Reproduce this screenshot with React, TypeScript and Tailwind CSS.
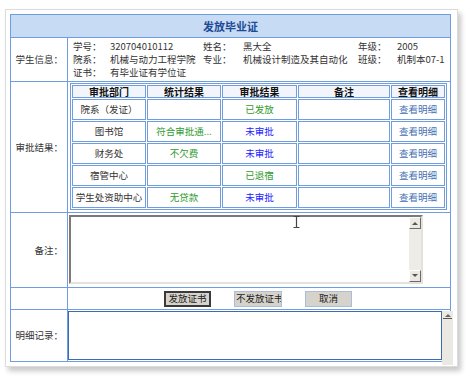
import React from "react";

const B = "border-[#6f9ddf]";

function Label({ children }: { children: React.ReactNode }) {
  return (
    <div className={`w-[57px] shrink-0 border-r ${B} flex items-center justify-end pr-[4px] text-[9.5px] text-[#333]`}>
      {children}
    </div>
  );
}

function ScrollBtn({ up }: { up: boolean }) {
  return (
    <div className="w-[12px] h-[12px] bg-[#ece9e2] border border-t-white border-l-white border-r-[#6b6b6b] border-b-[#6b6b6b] flex items-center justify-center">
      <svg width="6" height="4" viewBox="0 0 6 4">
        {up ? <path d="M0 4 L3 1 L6 4 Z" fill="#555" /> : <path d="M0 0 L3 3 L6 0 Z" fill="#555" />}
      </svg>
    </div>
  );
}

const rows = [
  { dept: "院系（发证）", stat: "", statC: "", res: "已发放", resC: "text-[#2f9a2f]" },
  { dept: "图书馆", stat: "符合审批通...", statC: "text-[#2f9a2f]", res: "未审批", resC: "text-[#2323ff]" },
  { dept: "财务处", stat: "不欠费", statC: "text-[#2f9a2f]", res: "未审批", resC: "text-[#2323ff]" },
  { dept: "宿管中心", stat: "", statC: "", res: "已退宿", resC: "text-[#2f9a2f]" },
  { dept: "学生处资助中心", stat: "无贷款", statC: "text-[#2f9a2f]", res: "未审批", resC: "text-[#2323ff]" },
];

export default function App() {
  const cell = `border ${B} bg-white flex items-center justify-center text-[9.5px] whitespace-nowrap overflow-hidden`;
  const head = `border ${B} bg-[#f2f6fc] flex items-center justify-center text-[10px] font-bold text-[#111] leading-none`;
  return (
    <div className="w-[469px] h-[382px] bg-white font-['Noto_Sans_CJK_SC',sans-serif] text-[#333] overflow-hidden">
      <div className="ml-[5px] mt-[9px] w-[453px] h-[358px] p-[4px] bg-white border border-[#dcdcdc] shadow-[3px_4px_5px_rgba(0,0,0,0.22)]">
        <div className={`w-[441px] h-[348px] border ${B} flex flex-col`}>
          {/* header */}
          <div className={`h-[23px] shrink-0 border-b ${B} bg-[#c7dbf4] flex items-center justify-center text-[11px] font-bold text-[#1d4a96]`}>
            发放毕业证
          </div>
          {/* student info */}
          <div className={`h-[44px] shrink-0 border-b ${B} flex`}>
            <Label>学生信息：</Label>
            <div className="flex-1 pl-[5px] pt-[2px] text-[9.5px] leading-[13px]">
              <div className="grid grid-cols-[37px_93px_40px_115px_39px_1fr]">
                <span>学号：</span><span>320704010112</span>
                <span>姓名：</span><span>黑大全</span>
                <span>年级：</span><span>2005</span>
                <span>院系：</span><span className="whitespace-nowrap">机械与动力工程学院</span>
                <span>专业：</span><span className="whitespace-nowrap">机械设计制造及其自动化</span>
                <span>班级：</span><span className="whitespace-nowrap">机制本07-1</span>
                <span>证书：</span><span className="whitespace-nowrap col-span-5">有毕业证有学位证</span>
              </div>
            </div>
          </div>
          {/* approval */}
          <div className={`h-[131px] shrink-0 border-b ${B} flex`}>
            <Label>审批结果：</Label>
            <div className="flex-1 pl-[2px] pt-[1px]">
              <div className={`grid grid-cols-[74px_74px_75px_92px_54px] grid-rows-[13px_repeat(5,21px)] gap-[1px] p-[1px] border ${B} w-[377px]`}>
                <div className={head}>审批部门</div>
                <div className={head}>统计结果</div>
                <div className={head}>审批结果</div>
                <div className={head}>备注</div>
                <div className={head}>查看明细</div>
                {rows.map((r, i) => (
                  <React.Fragment key={i}>
                    <div className={cell}>{r.dept}</div>
                    <div className={`${cell} ${r.statC}`}>{r.stat}</div>
                    <div className={`${cell} ${r.resC}`}>{r.res}</div>
                    <div className={cell}></div>
                    <div className={`${cell} text-[#4470b4]`}>查看明细</div>
                  </React.Fragment>
                ))}
              </div>
            </div>
          </div>
          {/* remarks */}
          <div className={`h-[75px] shrink-0 border-b ${B} flex`}>
            <Label>备注：</Label>
            <div className="flex-1 pl-[1px] pt-[2px] relative">
              <div className="w-[354px] h-[69px] border-2 border-t-[#7a7a7a] border-l-[#7a7a7a] border-r-[#e4e2dc] border-b-[#e4e2dc] bg-white flex justify-end">
                <div className="w-[12px] h-full bg-[#eeece6] flex flex-col justify-between">
                  <ScrollBtn up />
                  <ScrollBtn up={false} />
                </div>
              </div>
              <svg className="absolute left-[225px] top-[3px]" width="7" height="12" viewBox="0 0 7 12">
                <path d="M0.5 0.5 H6.5 M3.5 0.5 V11.5 M0.5 11.5 H6.5" stroke="#444" strokeWidth="1.2" fill="none" />
              </svg>
            </div>
          </div>
          {/* buttons */}
          <div className={`h-[22px] shrink-0 border-b ${B} flex`}>
            <div className={`w-[57px] shrink-0 border-r ${B}`} />
            <div className="flex-1 flex items-center pl-[96px] gap-[23px]">
              <div className="w-[47px] h-[16px] bg-[#d6d3cc] border-2 border-[#3a3a3a] flex items-center justify-center text-[9.5px] text-[#222] leading-none">发放证书</div>
              <div className="w-[48px] h-[16px] bg-[#d6d3cc] border border-[#a9bddc] flex items-center justify-start pl-[1px] text-[9.5px] text-[#222] leading-none whitespace-nowrap overflow-hidden">不发放证书</div>
              <div className="w-[47px] h-[16px] bg-[#d6d3cc] border border-[#a9bddc] flex items-center justify-center text-[9.5px] text-[#222] leading-none">取消</div>
            </div>
          </div>
          {/* detail */}
          <div className="flex-1 flex relative">
            <Label>明细记录：</Label>
            <div className="flex-1 pt-[1px]">
              <div className="w-[374px] h-[49px] border border-[#3e6ab0] bg-white" />
            </div>
            <div className="absolute right-[-3px] top-[1px] w-[11px] h-[54px] bg-[#ebe9e3] flex flex-col items-center pt-[2px]">
              <svg width="6" height="4" viewBox="0 0 6 4"><path d="M0 4 L3 1 L6 4 Z" fill="#666" /></svg>
              <div className="w-[9px] h-[1px] bg-[#555] mt-[1px]" />
            </div>
          </div>
        </div>
      </div>
    </div>
  );
}
